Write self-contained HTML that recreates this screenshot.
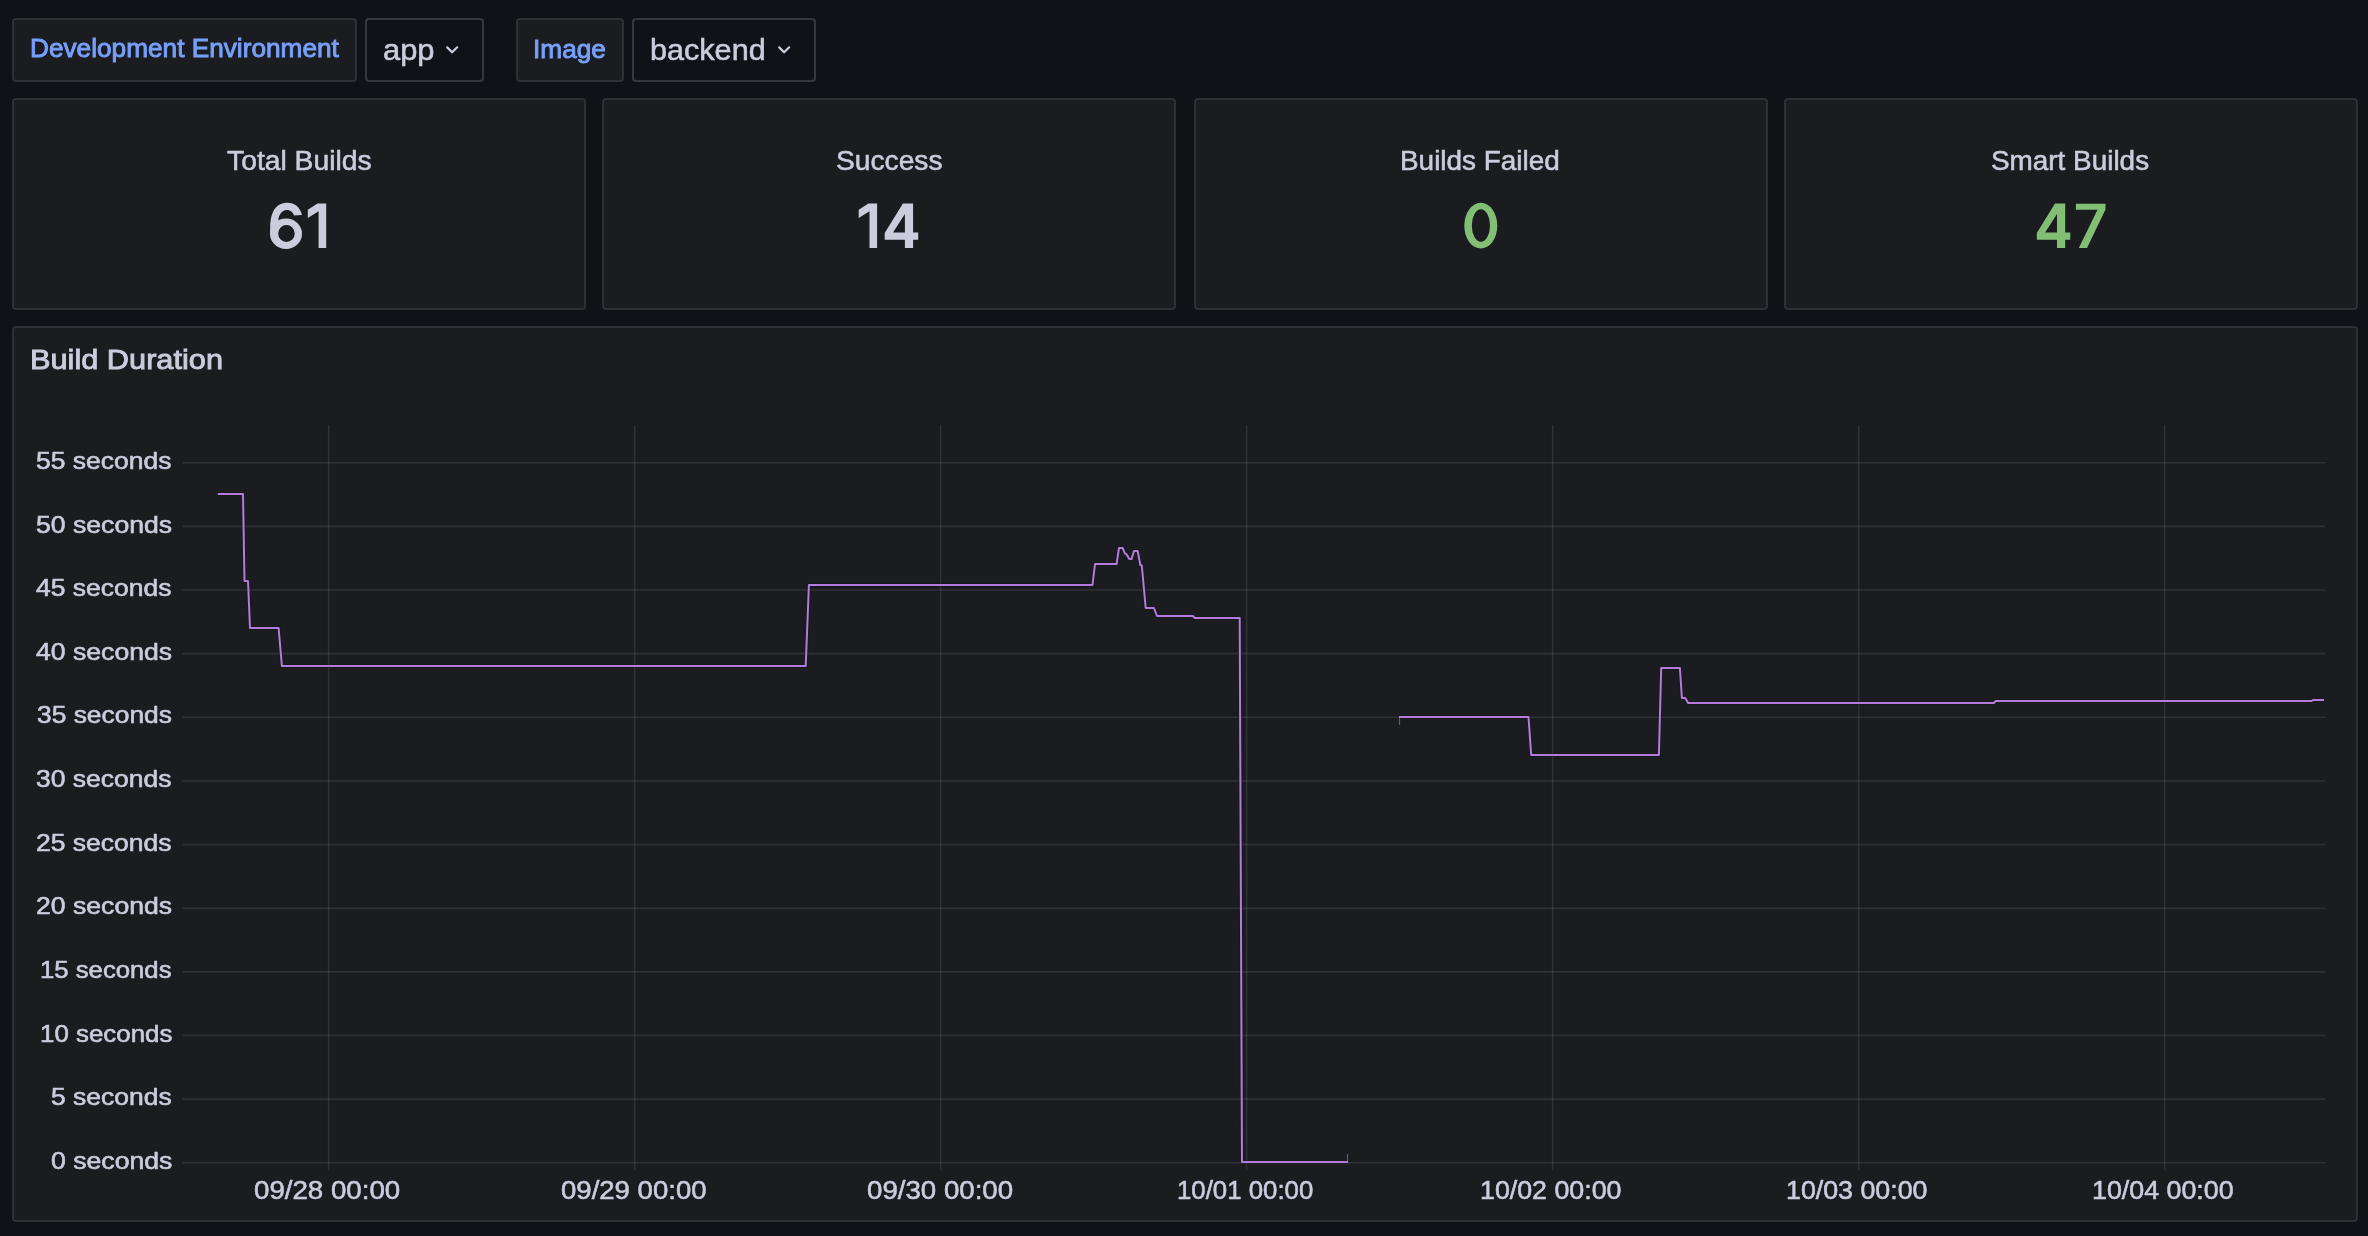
<!DOCTYPE html>
<html><head><meta charset="utf-8"><style>
html,body{margin:0;padding:0;}
body{width:2368px;height:1236px;background:#111217;position:relative;overflow:hidden;font-family:"Liberation Sans",sans-serif;}
div{will-change:transform;}
.box{position:absolute;box-sizing:border-box;border:2px solid #2e3035;border-radius:4px;background:#1a1c20;}
</style></head><body>
<div class="box" style="left:12px;top:18px;width:345px;height:64px;"></div>
<div class="box" style="left:365px;top:18px;width:119px;height:64px;background:#111217;border-color:#37383f"></div>
<div class="box" style="left:516px;top:18px;width:108px;height:64px;"></div>
<div class="box" style="left:632px;top:18px;width:184px;height:64px;background:#111217;border-color:#37383f"></div>
<div class="box" style="left:12px;top:98px;width:574px;height:212px;"></div>
<div class="box" style="left:602px;top:98px;width:574px;height:212px;"></div>
<div class="box" style="left:1194px;top:98px;width:574px;height:212px;"></div>
<div class="box" style="left:1784px;top:98px;width:574px;height:212px;"></div>
<div class="box" style="left:12px;top:326px;width:2346px;height:896px;"></div>
<svg style="position:absolute;left:0;top:0" width="2368" height="1236" viewBox="0 0 2368 1236">
<line x1="182.5" y1="462.75" x2="2325" y2="462.75" stroke="rgb(240,250,255)" stroke-opacity="0.095" stroke-width="1.6"/>
<line x1="182.5" y1="526.386" x2="2325" y2="526.386" stroke="rgb(240,250,255)" stroke-opacity="0.095" stroke-width="1.6"/>
<line x1="182.5" y1="590.023" x2="2325" y2="590.023" stroke="rgb(240,250,255)" stroke-opacity="0.095" stroke-width="1.6"/>
<line x1="182.5" y1="653.659" x2="2325" y2="653.659" stroke="rgb(240,250,255)" stroke-opacity="0.095" stroke-width="1.6"/>
<line x1="182.5" y1="717.295" x2="2325" y2="717.295" stroke="rgb(240,250,255)" stroke-opacity="0.095" stroke-width="1.6"/>
<line x1="182.5" y1="780.932" x2="2325" y2="780.932" stroke="rgb(240,250,255)" stroke-opacity="0.095" stroke-width="1.6"/>
<line x1="182.5" y1="844.568" x2="2325" y2="844.568" stroke="rgb(240,250,255)" stroke-opacity="0.095" stroke-width="1.6"/>
<line x1="182.5" y1="908.205" x2="2325" y2="908.205" stroke="rgb(240,250,255)" stroke-opacity="0.095" stroke-width="1.6"/>
<line x1="182.5" y1="971.841" x2="2325" y2="971.841" stroke="rgb(240,250,255)" stroke-opacity="0.095" stroke-width="1.6"/>
<line x1="182.5" y1="1035.477" x2="2325" y2="1035.477" stroke="rgb(240,250,255)" stroke-opacity="0.095" stroke-width="1.6"/>
<line x1="182.5" y1="1099.114" x2="2325" y2="1099.114" stroke="rgb(240,250,255)" stroke-opacity="0.095" stroke-width="1.6"/>
<line x1="182.5" y1="1162.75" x2="2325" y2="1162.75" stroke="rgb(240,250,255)" stroke-opacity="0.095" stroke-width="1.6"/>
<line x1="328.6" y1="425" x2="328.6" y2="1170.5" stroke="rgb(240,250,255)" stroke-opacity="0.1" stroke-width="1.5"/>
<line x1="634.6" y1="425" x2="634.6" y2="1170.5" stroke="rgb(240,250,255)" stroke-opacity="0.1" stroke-width="1.5"/>
<line x1="940.6" y1="425" x2="940.6" y2="1170.5" stroke="rgb(240,250,255)" stroke-opacity="0.1" stroke-width="1.5"/>
<line x1="1246.6" y1="425" x2="1246.6" y2="1170.5" stroke="rgb(240,250,255)" stroke-opacity="0.1" stroke-width="1.5"/>
<line x1="1552.6" y1="425" x2="1552.6" y2="1170.5" stroke="rgb(240,250,255)" stroke-opacity="0.1" stroke-width="1.5"/>
<line x1="1858.6" y1="425" x2="1858.6" y2="1170.5" stroke="rgb(240,250,255)" stroke-opacity="0.1" stroke-width="1.5"/>
<line x1="2164.6" y1="425" x2="2164.6" y2="1170.5" stroke="rgb(240,250,255)" stroke-opacity="0.1" stroke-width="1.5"/>
<polyline points="217.8,494 243,494 244.5,581 248,581 250,628 278.6,628 281.9,666 805.7,666 808.9,585 1092.5,585 1095,564 1116.6,564 1119,548 1122.6,548 1125,553.6 1126.3,554.1 1129.4,559 1131.6,559 1134,551 1137.7,551 1140.3,565 1141.8,565.5 1145.7,608 1153.9,608 1157,616 1192.9,616 1194.9,618 1239.7,618 1242,1162 1348,1162" fill="none" stroke="#111513" stroke-opacity="0.25" stroke-width="4" stroke-linejoin="round"/>
<polyline points="1399,717 1528.5,717 1531.2,755 1658.9,755 1661.2,668 1679.9,668 1681.9,698 1685.3,698 1688.1,703 1993.8,703 1995.8,701 2311.5,701 2313,700 2324,700" fill="none" stroke="#111513" stroke-opacity="0.25" stroke-width="4" stroke-linejoin="round"/>
<polyline points="217.8,494 243,494 244.5,581 248,581 250,628 278.6,628 281.9,666 805.7,666 808.9,585 1092.5,585 1095,564 1116.6,564 1119,548 1122.6,548 1125,553.6 1126.3,554.1 1129.4,559 1131.6,559 1134,551 1137.7,551 1140.3,565 1141.8,565.5 1145.7,608 1153.9,608 1157,616 1192.9,616 1194.9,618 1239.7,618 1242,1162 1348,1162" fill="none" stroke="#b47bdc" stroke-width="2" stroke-linejoin="round"/>
<polyline points="1399,717 1528.5,717 1531.2,755 1658.9,755 1661.2,668 1679.9,668 1681.9,698 1685.3,698 1688.1,703 1993.8,703 1995.8,701 2311.5,701 2313,700 2324,700" fill="none" stroke="#b47bdc" stroke-width="2" stroke-linejoin="round"/>
<line x1="1347.5" y1="1161" x2="1347.5" y2="1154" stroke="#b47bdc" stroke-opacity="0.55" stroke-width="1.2"/>
<line x1="1399.5" y1="718" x2="1399.5" y2="725" stroke="#b47bdc" stroke-opacity="0.55" stroke-width="1.2"/>
<polyline points="447.2,47.4 452.1,52.3 457.2,47.3" fill="none" stroke="#ccccdc" stroke-width="2.2" stroke-linecap="round" stroke-linejoin="round"/>
<polyline points="779.2,47.4 784.1,52.3 789.2,47.3" fill="none" stroke="#ccccdc" stroke-width="2.2" stroke-linecap="round" stroke-linejoin="round"/>
<path d="M270,233.7 A16,15.2 0 1,0 302,233.7 A16,15.2 0 1,0 270,233.7 Z M278.2,233.6 A8.25,8.5 0 1,0 294.7,233.6 A8.25,8.5 0 1,0 278.2,233.6 Z" fill="#ccccdc" fill-rule="evenodd"/>
<path d="M302,214.9 C300,207 294.5,202.8 287.4,202.8 C276,202.8 270.2,212 270.2,228 L270.2,234 L277.8,234 L277.8,226 C277.8,215 281.5,210 286.9,210 C290.5,210 293,212.5 294,215.4 Z" fill="#ccccdc"/>
<path d="M307.8,209.8 L317.5,203.5 L326.2,203.5 L326.2,248.1 L318.6,248.1 L318.6,211.2 L307.8,218.1 Z" fill="#ccccdc"/>
<path d="M858.7,209.8 L868.4,203.5 L877.1,203.5 L877.1,248.1 L869.5,248.1 L869.5,211.2 L858.7,218.1 Z" fill="#ccccdc"/>
<path d="M902.9,203.5 L913.1,203.5 L913.1,232.6 L918.2,232.6 L918.2,239.7 L913.1,239.7 L913.1,248.1 L904.9,248.1 L904.9,239.7 L884.7,239.7 L884.7,232.9 Z M904.9,213.9 L904.9,232.6 L893,232.6 Z" fill="#ccccdc" fill-rule="evenodd"/>
<path d="M1464.3,225.7 A16.5,22.9 0 1,0 1497.3,225.7 A16.5,22.9 0 1,0 1464.3,225.7 Z M1471.8,225.55 A9.1,16.25 0 1,0 1490,225.55 A9.1,16.25 0 1,0 1471.8,225.55 Z" fill="#82bf74" fill-rule="evenodd"/>
<path d="M2055,203.5 L2065.2,203.5 L2065.2,232.6 L2070.3,232.6 L2070.3,239.7 L2065.2,239.7 L2065.2,248.1 L2057,248.1 L2057,239.7 L2036.8,239.7 L2036.8,232.9 Z M2057,213.9 L2057,232.6 L2045.1,232.6 Z" fill="#82bf74" fill-rule="evenodd"/>
<path d="M2075.9,203.7 L2105.5,203.7 L2105.5,209.6 L2087,248.1 L2078.8,248.1 L2097.5,209.8 L2075.9,209.8 Z" fill="#82bf74"/>
</svg>
<div style="position:absolute;left:29.883px;top:36.37px;font-size:25.8px;color:#77a0fc;font-weight:normal;line-height:1;white-space:nowrap;-webkit-text-stroke:0.9px #77a0fc;transform:scaleX(1.016);transform-origin:0 0;">Development Environment</div>
<div style="position:absolute;left:533.442px;top:36.57px;font-size:25.8px;color:#77a0fc;font-weight:normal;line-height:1;white-space:nowrap;-webkit-text-stroke:0.9px #77a0fc;transform:scaleX(1.017);transform-origin:0 0;">Image</div>
<div style="position:absolute;left:382.843px;top:35.025px;font-size:29.5px;color:#ccccdc;font-weight:normal;line-height:1;white-space:nowrap;-webkit-text-stroke:0.55px #ccccdc;transform:scaleX(1.046);transform-origin:0 0;">app</div>
<div style="position:absolute;left:650.41px;top:34.925px;font-size:29.5px;color:#ccccdc;font-weight:normal;line-height:1;white-space:nowrap;-webkit-text-stroke:0.55px #ccccdc;transform:scaleX(1.037);transform-origin:0 0;">backend</div>
<div style="position:absolute;left:226.785px;top:148.435px;font-size:26.9px;color:#ccccdc;font-weight:normal;line-height:1;white-space:nowrap;-webkit-text-stroke:0.55px #ccccdc;transform:scaleX(1.052);transform-origin:0 0;">Total Builds</div>
<div style="position:absolute;left:835.545px;top:148.435px;font-size:26.9px;color:#ccccdc;font-weight:normal;line-height:1;white-space:nowrap;-webkit-text-stroke:0.55px #ccccdc;transform:scaleX(1.048);transform-origin:0 0;">Success</div>
<div style="position:absolute;left:1400.463px;top:148.435px;font-size:26.9px;color:#ccccdc;font-weight:normal;line-height:1;white-space:nowrap;-webkit-text-stroke:0.55px #ccccdc;transform:scaleX(1.038);transform-origin:0 0;">Builds Failed</div>
<div style="position:absolute;left:1991.457px;top:148.435px;font-size:26.9px;color:#ccccdc;font-weight:normal;line-height:1;white-space:nowrap;-webkit-text-stroke:0.55px #ccccdc;transform:scaleX(1.037);transform-origin:0 0;">Smart Builds</div>
<div style="position:absolute;left:29.69px;top:345.43px;font-size:28.2px;color:#ccccdc;font-weight:normal;line-height:1;white-space:nowrap;-webkit-text-stroke:0.9px #ccccdc;transform:scaleX(1.09);transform-origin:0 0;">Build Duration</div>
<div style="position:absolute;left:36.388px;top:448.895px;font-size:24.3px;color:#ccccdc;font-weight:normal;line-height:1;white-space:nowrap;-webkit-text-stroke:0.6px #ccccdc;transform:scaleX(1.09);transform-origin:0 0;">55 seconds</div>
<div style="position:absolute;left:35.783px;top:512.531px;font-size:24.3px;color:#ccccdc;font-weight:normal;line-height:1;white-space:nowrap;-webkit-text-stroke:0.6px #ccccdc;transform:scaleX(1.095);transform-origin:0 0;">50 seconds</div>
<div style="position:absolute;left:36.425px;top:576.168px;font-size:24.3px;color:#ccccdc;font-weight:normal;line-height:1;white-space:nowrap;-webkit-text-stroke:0.6px #ccccdc;transform:scaleX(1.09);transform-origin:0 0;">45 seconds</div>
<div style="position:absolute;left:35.824px;top:639.804px;font-size:24.3px;color:#ccccdc;font-weight:normal;line-height:1;white-space:nowrap;-webkit-text-stroke:0.6px #ccccdc;transform:scaleX(1.095);transform-origin:0 0;">40 seconds</div>
<div style="position:absolute;left:36.865px;top:703.44px;font-size:24.3px;color:#ccccdc;font-weight:normal;line-height:1;white-space:nowrap;-webkit-text-stroke:0.6px #ccccdc;transform:scaleX(1.086);transform-origin:0 0;">35 seconds</div>
<div style="position:absolute;left:36.262px;top:767.077px;font-size:24.3px;color:#ccccdc;font-weight:normal;line-height:1;white-space:nowrap;-webkit-text-stroke:0.6px #ccccdc;transform:scaleX(1.091);transform-origin:0 0;">30 seconds</div>
<div style="position:absolute;left:36.345px;top:830.713px;font-size:24.3px;color:#ccccdc;font-weight:normal;line-height:1;white-space:nowrap;-webkit-text-stroke:0.6px #ccccdc;transform:scaleX(1.091);transform-origin:0 0;">25 seconds</div>
<div style="position:absolute;left:35.74px;top:894.35px;font-size:24.3px;color:#ccccdc;font-weight:normal;line-height:1;white-space:nowrap;-webkit-text-stroke:0.6px #ccccdc;transform:scaleX(1.095);transform-origin:0 0;">20 seconds</div>
<div style="position:absolute;left:40.335px;top:957.986px;font-size:24.3px;color:#ccccdc;font-weight:normal;line-height:1;white-space:nowrap;-webkit-text-stroke:0.6px #ccccdc;transform:scaleX(1.058);transform-origin:0 0;">15 seconds</div>
<div style="position:absolute;left:39.526px;top:1021.622px;font-size:24.3px;color:#ccccdc;font-weight:normal;line-height:1;white-space:nowrap;-webkit-text-stroke:0.6px #ccccdc;transform:scaleX(1.065);transform-origin:0 0;">10 seconds</div>
<div style="position:absolute;left:51.489px;top:1085.259px;font-size:24.3px;color:#ccccdc;font-weight:normal;line-height:1;white-space:nowrap;-webkit-text-stroke:0.6px #ccccdc;transform:scaleX(1.089);transform-origin:0 0;">5 seconds</div>
<div style="position:absolute;left:50.76px;top:1148.895px;font-size:24.3px;color:#ccccdc;font-weight:normal;line-height:1;white-space:nowrap;-webkit-text-stroke:0.6px #ccccdc;transform:scaleX(1.096);transform-origin:0 0;">0 seconds</div>
<div style="position:absolute;left:254.301px;top:1177.57px;font-size:25.8px;color:#ccccdc;font-weight:normal;line-height:1;white-space:nowrap;-webkit-text-stroke:0.55px #ccccdc;transform:scaleX(1.073);transform-origin:0 0;">09/28 00:00</div>
<div style="position:absolute;left:560.807px;top:1177.57px;font-size:25.8px;color:#ccccdc;font-weight:normal;line-height:1;white-space:nowrap;-webkit-text-stroke:0.55px #ccccdc;transform:scaleX(1.068);transform-origin:0 0;">09/29 00:00</div>
<div style="position:absolute;left:866.703px;top:1177.57px;font-size:25.8px;color:#ccccdc;font-weight:normal;line-height:1;white-space:nowrap;-webkit-text-stroke:0.55px #ccccdc;transform:scaleX(1.072);transform-origin:0 0;">09/30 00:00</div>
<div style="position:absolute;left:1176.795px;top:1177.57px;font-size:25.8px;color:#ccccdc;font-weight:normal;line-height:1;white-space:nowrap;-webkit-text-stroke:0.55px #ccccdc;transform:scaleX(1);transform-origin:0 0;">10/01 00:00</div>
<div style="position:absolute;left:1480.234px;top:1177.57px;font-size:25.8px;color:#ccccdc;font-weight:normal;line-height:1;white-space:nowrap;-webkit-text-stroke:0.55px #ccccdc;transform:scaleX(1.038);transform-origin:0 0;">10/02 00:00</div>
<div style="position:absolute;left:1786.334px;top:1177.57px;font-size:25.8px;color:#ccccdc;font-weight:normal;line-height:1;white-space:nowrap;-webkit-text-stroke:0.55px #ccccdc;transform:scaleX(1.038);transform-origin:0 0;">10/03 00:00</div>
<div style="position:absolute;left:2092.033px;top:1177.57px;font-size:25.8px;color:#ccccdc;font-weight:normal;line-height:1;white-space:nowrap;-webkit-text-stroke:0.55px #ccccdc;transform:scaleX(1.039);transform-origin:0 0;">10/04 00:00</div>
</body></html>
